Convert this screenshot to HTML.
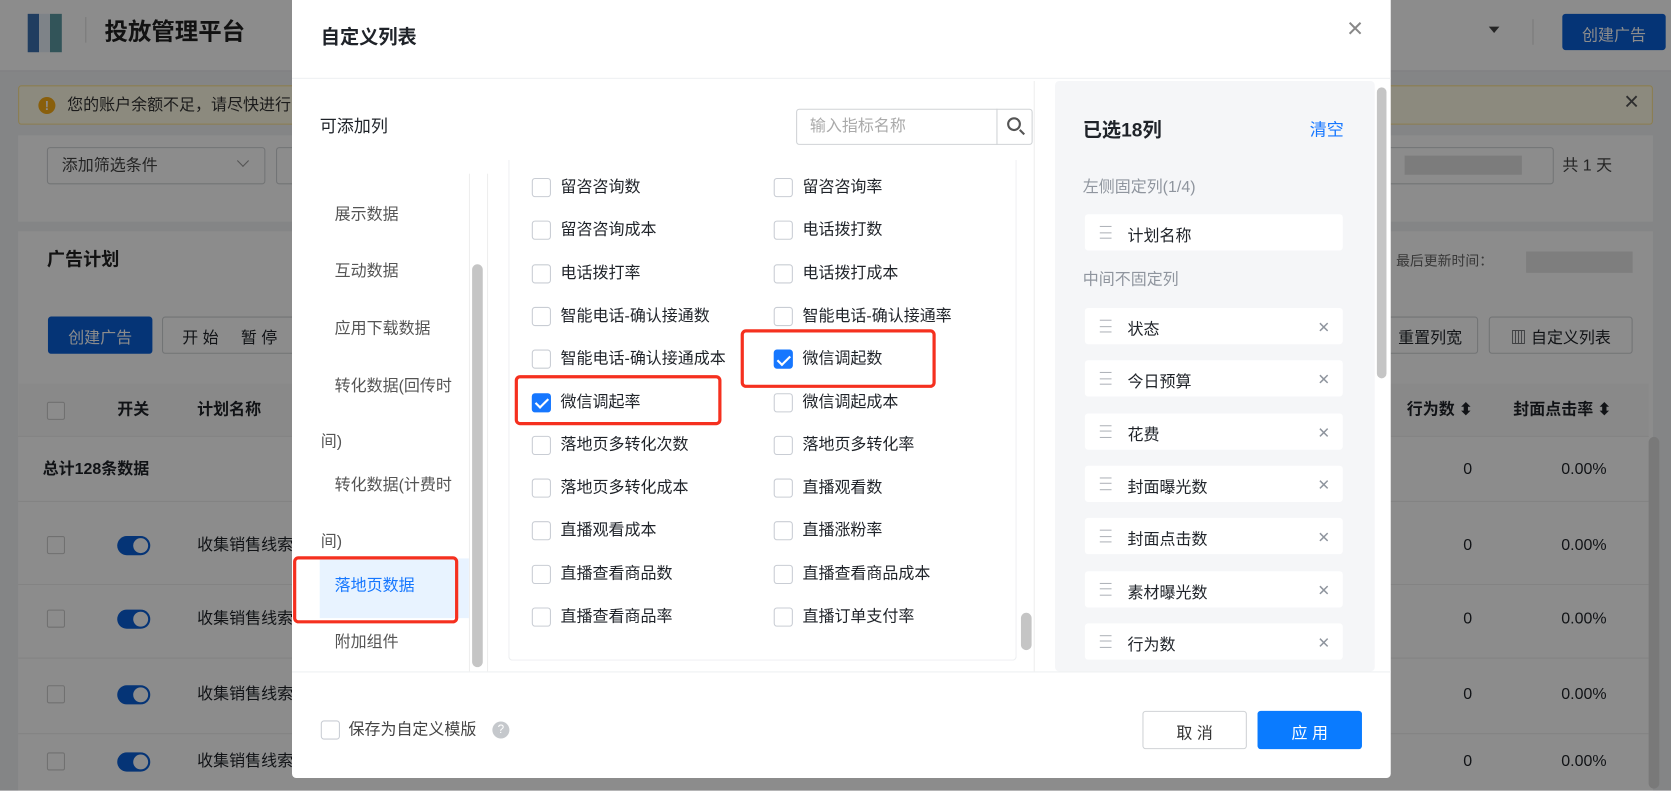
<!DOCTYPE html>
<html><head><meta charset="utf-8"><style>
*{box-sizing:border-box;margin:0;padding:0}
html,body{width:1671px;height:791px;overflow:hidden;background:#fff}
body{font-family:"Liberation Sans","Noto Sans CJK SC",sans-serif;color:#1f2329}
#w{position:absolute;left:0;top:0;width:1568px;height:742px;transform:scale(1.0657);transform-origin:0 0;background:#f0f2f5;overflow:hidden}
.a{position:absolute}
.t{position:absolute;white-space:nowrap;line-height:1}
.cb{position:absolute;width:18px;height:18px;border:1px solid #c9cdd4;border-radius:3px;background:#fff}
.cb.on{background:#1677ff;border-color:#1677ff}
.cb.on:after{content:"";position:absolute;left:5px;top:1.5px;width:5px;height:10px;border:solid #fff;border-width:0 2px 2px 0;transform:rotate(45deg)}
.it{position:absolute;left:1018px;width:242px;height:34px;background:#fff;border-radius:3px;font-size:15px}
.it .h{position:absolute;left:14px;top:11px;width:11px;height:12px;border-top:1px solid #b0b4ba;border-bottom:1px solid #b0b4ba}
.it .h:after{content:"";position:absolute;left:0;right:0;top:4.5px;border-top:1px solid #b0b4ba}
.it .l{position:absolute;left:40px;top:9px}
.it .x{position:absolute;right:12px;top:10px;color:#8f959e;font-size:14px}
.btn{position:absolute;border:1px solid #d0d3d6;background:#fff;border-radius:3px;font-size:15px;text-align:center}
</style></head><body><div id="w">
<div class="a" style="left:0;top:0;width:1568px;height:67px;background:#fff;border-bottom:1px solid #e5e6eb"></div>
<div class="a" style="left:26px;top:13px;width:32px;height:36px;background:linear-gradient(90deg,#3b6fb0 33%,#e6eef7 33%,#e6eef7 66%,#5b9aa3 66%)"></div>
<div class="a" style="left:80px;top:16px;width:1px;height:24px;background:#ddd"></div>
<div class="t" style="left:98px;top:19px;font-size:22px;font-weight:bold;color:#222">投放管理平台</div>
<div class="a" style="left:1397px;top:25px;border:5px solid transparent;border-top:6px solid #444"></div>
<div class="a" style="left:1438px;top:18px;width:1px;height:24px;background:#ddd"></div>
<div class="btn" style="left:1466px;top:13px;width:97px;height:34px;background:#0a5fd8;border-color:#0a5fd8;color:#fff;padding-top:8px">创建广告</div>
<div class="a" style="left:17px;top:80px;width:1534px;height:37px;background:#fffbe6;border:1px solid #ffe58f;border-radius:3px"></div>
<div class="a" style="left:36px;top:91px;width:16px;height:16px;border-radius:50%;background:#faad14;color:#fff;font-size:12px;text-align:center;font-weight:bold;line-height:16px">!</div>
<div class="t" style="left:63px;top:91px;font-size:15px;color:#333">您的账户余额不足，请尽快进行</div>
<div class="t" style="left:1524px;top:84px;font-size:24px;color:#555">×</div>
<div class="a" style="left:17px;top:127px;width:1534px;height:81px;background:#fff"></div>
<div class="a" style="left:44px;top:138px;width:205px;height:35px;border:1px solid #d0d3d6;border-radius:3px"></div>
<div class="t" style="left:58px;top:148px;font-size:15px;color:#444">添加筛选条件</div>
<div class="a" style="left:224px;top:147px;width:8px;height:8px;border-right:1px solid #999;border-bottom:1px solid #999;transform:rotate(45deg)"></div>
<div class="a" style="left:259px;top:138px;width:20px;height:35px;border:1px solid #d0d3d6;border-radius:3px"></div>
<div class="a" style="left:1290px;top:138px;width:168px;height:35px;border:1px solid #d0d3d6;border-radius:3px"></div>
<div class="a" style="left:1318px;top:146px;width:110px;height:18px;background:#e2e2e2"></div>
<div class="t" style="left:1466px;top:148px;font-size:15px;color:#444">共 1 天</div>
<div class="a" style="left:17px;top:217px;width:1534px;height:530px;background:#fff"></div>
<div class="t" style="left:44px;top:235px;font-size:17px;font-weight:bold;color:#222">广告计划</div>
<div class="t" style="left:1310px;top:238px;font-size:13px;color:#666">最后更新时间：</div>
<div class="a" style="left:1432px;top:236px;width:100px;height:20px;background:#e6e6e6"></div>
<div class="btn" style="left:45px;top:297px;width:98px;height:35px;background:#0a5fd8;border-color:#0a5fd8;color:#fff;padding-top:8px">创建广告</div>
<div class="btn" style="left:152px;top:297px;width:130px;height:35px;padding-top:8px;text-align:left;padding-left:18px">开 始 &nbsp; &nbsp; 暂 停</div>
<div class="btn" style="left:1290px;top:297px;width:97px;height:35px;padding-top:8px;text-align:right;padding-right:14px">重置列宽</div>
<div class="btn" style="left:1397px;top:297px;width:135px;height:35px;padding-top:8px">▥ 自定义列表</div>
<div class="a" style="left:17px;top:360px;width:1530px;height:50px;background:#fafafa;border-bottom:1px solid #eee"></div>
<div class="a" style="left:44px;top:377px;width:17px;height:17px;border:1px solid #ccc;border-radius:2px;background:#fff"></div>
<div class="t" style="left:110px;top:377px;font-size:15px;font-weight:bold">开关</div>
<div class="t" style="left:185px;top:377px;font-size:15px;font-weight:bold">计划名称</div>
<div class="t" style="left:1320px;top:377px;font-size:15px;font-weight:bold">行为数 ⬍</div>
<div class="t" style="left:1420px;top:377px;font-size:15px;font-weight:bold">封面点击率 ⬍</div>
<div class="t" style="left:40px;top:433px;font-size:15px;font-weight:bold">总计128条数据</div>
<div class="t" style="left:1373px;top:433px;font-size:15px">0</div><div class="t" style="left:1465px;top:433px;font-size:15px">0.00%</div>
<div class="a" style="left:17px;top:470px;width:1530px;height:1px;background:#eee"></div>
<div id="rows"></div>
<div class="a" style="left:1547px;top:410px;width:10px;height:330px;background:#ddd;border-radius:5px"></div>
<div class="a" style="left:0;top:0;width:1568px;height:742px;background:rgba(0,0,0,0.45)"></div>
<div class="a" style="left:274px;top:0;width:1031px;height:730px;background:#fff;border-radius:0 0 4px 4px"></div>
<div class="t" style="left:301px;top:26px;font-size:18px;font-weight:bold;color:#1f2329">自定义列表</div>
<div class="t" style="left:1264px;top:13px;font-size:26px;color:#888;font-weight:300">×</div>
<div class="a" style="left:274px;top:73px;width:1031px;height:1px;background:#eef0f2"></div>
<div class="t" style="left:300px;top:112px;font-size:16px;color:#1f2329">可添加列</div>
<div class="a" style="left:747px;top:102px;width:222px;height:34px;border:1px solid #d0d3d6;border-radius:3px"></div>
<div class="t" style="left:760px;top:111px;font-size:15px;color:#aaa">输入指标名称</div>
<div class="a" style="left:935px;top:102px;width:1px;height:34px;background:#d0d3d6"></div>
<div class="a" style="left:945px;top:110px;width:13px;height:13px;border:2px solid #555;border-radius:50%"></div>
<div class="a" style="left:956px;top:123px;width:6px;height:2px;background:#555;transform:rotate(45deg)"></div>
<div class="a" style="left:440px;top:163px;width:1px;height:467px;background:#eee"></div>
<div class="a" style="left:443px;top:248px;width:10px;height:378px;background:#c5c5c5;border-radius:5px"></div>
<div class="a" style="left:457px;top:163px;width:1px;height:467px;background:#eee"></div>
<div class="t" style="left:314px;top:194px;font-size:15px;color:#555">展示数据</div>
<div class="t" style="left:314px;top:247px;font-size:15px;color:#555">互动数据</div>
<div class="t" style="left:314px;top:301px;font-size:15px;color:#555">应用下载数据</div>
<div class="t" style="left:314px;top:355px;font-size:15px;color:#555">转化数据(回传时</div>
<div class="t" style="left:301px;top:407px;font-size:15px;color:#555">间)</div>
<div class="t" style="left:314px;top:448px;font-size:15px;color:#555">转化数据(计费时</div>
<div class="t" style="left:301px;top:501px;font-size:15px;color:#555">间)</div>
<div class="a" style="left:300px;top:524px;width:140px;height:56px;background:#e8f3ff"></div>
<div class="t" style="left:314px;top:542px;font-size:15px;color:#1677ff">落地页数据</div>
<div class="a" style="left:275px;top:522px;width:155px;height:63px;border:3px solid #f5301f;border-radius:5px"></div>
<div class="t" style="left:314px;top:595px;font-size:15px;color:#555">附加组件</div>
<div class="a" style="left:477px;top:150px;width:477px;height:470px;border:1px solid #eceef0;border-top:none;border-radius:0 0 4px 4px"></div>
<div id="cbs"></div>
<div class="a" style="left:970px;top:76px;width:1px;height:554px;background:#eee"></div>
<div class="a" style="left:958px;top:575px;width:10px;height:35px;background:#c5c5c5;border-radius:5px"></div>
<div class="a" style="left:483px;top:352px;width:194px;height:47px;border:3px solid #f5301f;border-radius:5px"></div>
<div class="a" style="left:695px;top:309px;width:183px;height:55px;border:3px solid #f5301f;border-radius:5px"></div>
<div class="a" style="left:990px;top:76px;width:300px;height:554px;background:#f5f6f8;border-radius:4px"></div>
<div class="a" style="left:1292px;top:82px;width:9px;height:273px;background:#c5c5c5;border-radius:5px"></div>
<div class="t" style="left:1016px;top:113px;font-size:18px;font-weight:bold">已选18列</div>
<div class="t" style="left:1229px;top:115px;font-size:16px;color:#1677ff">清空</div>
<div class="t" style="left:1016px;top:168px;font-size:15px;color:#8f959e">左侧固定列(1/4)</div>
<div class="it" style="top:201px"><div class="h"></div><div class="l">计划名称</div></div>
<div class="t" style="left:1016px;top:255px;font-size:15px;color:#8f959e">中间不固定列</div>
<div id="sel"></div>
<div class="a" style="left:274px;top:630px;width:1031px;height:1px;background:#eef0f2"></div>
<div class="cb" style="left:301px;top:676px"></div>
<div class="t" style="left:327px;top:677px;font-size:15px;color:#444">保存为自定义模版</div>
<div class="a" style="left:462px;top:677px;width:16px;height:16px;border-radius:50%;background:#c5c8cc;color:#fff;font-size:11px;text-align:center;line-height:16px">?</div>
<div class="btn" style="left:1072px;top:667px;width:98px;height:36px;padding-top:9px;color:#333">取 消</div>
<div class="btn" style="left:1180px;top:667px;width:98px;height:36px;padding-top:9px;background:#0a7bff;border-color:#0a7bff;color:#fff">应 用</div>
</div>
<script>
var L=[["留咨咨询数","留咨咨询率"],["留咨咨询成本","电话拨打数"],["电话拨打率","电话拨打成本"],["智能电话-确认接通数","智能电话-确认接通率"],["智能电话-确认接通成本","微信调起数"],["微信调起率","微信调起成本"],["落地页多转化次数","落地页多转化率"],["落地页多转化成本","直播观看数"],["直播观看成本","直播涨粉率"],["直播查看商品数","直播查看商品成本"],["直播查看商品率","直播订单支付率"]];
var h="";L.forEach(function(r,i){var y=176+i*40.3;
h+='<div class="cb'+(i==5?' on':'')+'" style="left:499px;top:'+(y-9)+'px"></div><div class="t" style="left:526px;top:'+(y-8)+'px;font-size:15px">'+r[0]+'</div>';
h+='<div class="cb'+(i==4?' on':'')+'" style="left:726px;top:'+(y-9)+'px"></div><div class="t" style="left:753px;top:'+(y-8)+'px;font-size:15px">'+r[1]+'</div>';});
document.getElementById("cbs").innerHTML=h;
var S=["状态","今日预算","花费","封面曝光数","封面点击数","素材曝光数","行为数"];h="";
S.forEach(function(s,i){h+='<div class="it" style="top:'+(289+i*49.3)+'px"><div class="h"></div><div class="l">'+s+'</div><div class="x">✕</div></div>'});
document.getElementById("sel").innerHTML=h;
h="";[512,581,652,715].forEach(function(y){h+='<div class="a" style="left:44px;top:'+(y-9)+'px;width:17px;height:17px;border:1px solid #ccc;border-radius:2px;background:#fff"></div><div class="a" style="left:110px;top:'+(y-9)+'px;width:31px;height:18px;border-radius:9px;background:#0a5fd8"><div style="position:absolute;right:2px;top:2px;width:14px;height:14px;border-radius:50%;background:#fff"></div></div><div class="t" style="left:185px;top:'+(y-8)+'px;font-size:15px">收集销售线索</div><div class="t" style="left:1373px;top:'+(y-8)+'px;font-size:15px">0</div><div class="t" style="left:1465px;top:'+(y-8)+'px;font-size:15px">0.00%</div><div class="a" style="left:17px;top:'+(y+36)+'px;width:1530px;height:1px;background:#eee"></div>'});
document.getElementById("rows").innerHTML=h;
</script>
</body></html>
